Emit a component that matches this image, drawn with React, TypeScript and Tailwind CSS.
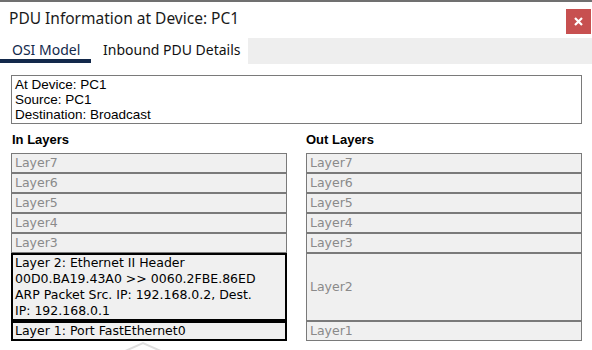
import React from "react";

const inLayers = ["Layer7", "Layer6", "Layer5", "Layer4", "Layer3"];

const GrayBox: React.FC<{ label: string; tall?: boolean }> = ({ label, tall }) => (
    <div
        className={`flex items-center border border-[#7a7a7a] bg-[#f0f0f0] pl-[3px] text-[#8a8a8a] ${tall ? "h-[68px]" : "h-[20px]"}`}
    >
        {label}
    </div>
);

const App: React.FC = () => {
    return (
        <div className="relative flex h-[350px] w-[592px] flex-col overflow-hidden border-t-2 border-[#707070] bg-white">
            {/* title bar */}
            <div className="flex h-[36px] shrink-0 items-start justify-between">
                <div
                    className="pl-[9px] pt-[6px] text-[15.5px] leading-[20px] text-[#1a1a1a]"
                    style={{ fontFamily: '"Noto Sans", sans-serif' }}
                >
                    PDU Information at Device: PC1
                </div>
                <div className="mr-[1px] mt-[7px] flex h-[25px] w-[25px] items-center justify-center bg-[#c75050]">
                    <svg width="9" height="9" viewBox="0 0 9 9">
                        <path d="M1 1 L8 8 M8 1 L1 8" stroke="#ffffff" strokeWidth="2.2" />
                    </svg>
                </div>
            </div>

            {/* tabs */}
            <div
                className="flex h-[26px] shrink-0 text-[14px]"
                style={{ fontFamily: '"Noto Sans", sans-serif' }}
            >
                <div className="flex h-[25px] w-[91px] items-start border-b-4 border-[#13294b] pl-[12px] pt-[2px] leading-[20px] text-[#13294b]">
                    OSI Model
                </div>
                <div className="flex w-[157px] items-start pl-[12px] pt-[2px] leading-[20px] text-[#111]">
                    Inbound PDU Details
                </div>
                <div className="flex-1 bg-[#eeeeee]" />
            </div>

            {/* info box */}
            <div
                className="ml-[11px] mt-[11px] h-[49px] w-[571px] border border-[#7a7a7a] pl-[3px] pt-[1px] text-[13.5px] leading-[15px] text-black"
                style={{ fontFamily: '"Liberation Sans", Arial, sans-serif' }}
            >
                <div>At Device: PC1</div>
                <div>Source: PC1</div>
                <div>Destination: Broadcast</div>
            </div>

            {/* layers */}
            <div className="ml-[11px] mt-[8px] flex gap-[19px]">
                <div className="flex w-[276px] flex-col">
                    <div
                        className="mb-[5px] pl-[1px] text-[13px] font-bold leading-[16px] text-black"
                        style={{ fontFamily: '"Liberation Sans", Arial, sans-serif' }}
                    >
                        In Layers
                    </div>
                    <div
                        className="flex flex-col text-[12.5px]"
                        style={{ fontFamily: '"DejaVu Sans", Verdana, sans-serif' }}
                    >
                        {inLayers.map((l) => (
                            <GrayBox key={l} label={l} />
                        ))}
                        <div className="h-[68px] border-2 border-black bg-[#f0f0f0] pl-[2px] leading-[16px] text-black">
                            Layer 2: Ethernet II Header
                            <br />
                            00D0.BA19.43A0 &gt;&gt; 0060.2FBE.86ED
                            <br />
                            ARP Packet Src. IP: 192.168.0.2, Dest.
                            <br />
                            IP: 192.168.0.1
                        </div>
                        <div className="flex h-[20px] items-center border-2 border-black bg-[#f0f0f0] pl-[2px] text-black">
                            Layer 1: Port FastEthernet0
                        </div>
                    </div>
                </div>

                <div className="flex w-[276px] flex-col">
                    <div
                        className="mb-[5px] text-[13px] font-bold leading-[16px] text-black"
                        style={{ fontFamily: '"Liberation Sans", Arial, sans-serif' }}
                    >
                        Out Layers
                    </div>
                    <div
                        className="flex flex-col text-[12.5px]"
                        style={{ fontFamily: '"DejaVu Sans", Verdana, sans-serif' }}
                    >
                        {inLayers.map((l) => (
                            <GrayBox key={l} label={l} />
                        ))}
                        <GrayBox label="Layer2" tall />
                        <GrayBox label="Layer1" />
                    </div>
                </div>
            </div>

            {/* faint scroll chevron */}
            <svg className="absolute left-[122px] top-[339px]" width="44" height="12" viewBox="0 0 44 12">
                <polyline points="1,11 21,2 41,11" fill="none" stroke="#dedede" strokeWidth="2" />
            </svg>
        </div>
    );
};

export default App;
